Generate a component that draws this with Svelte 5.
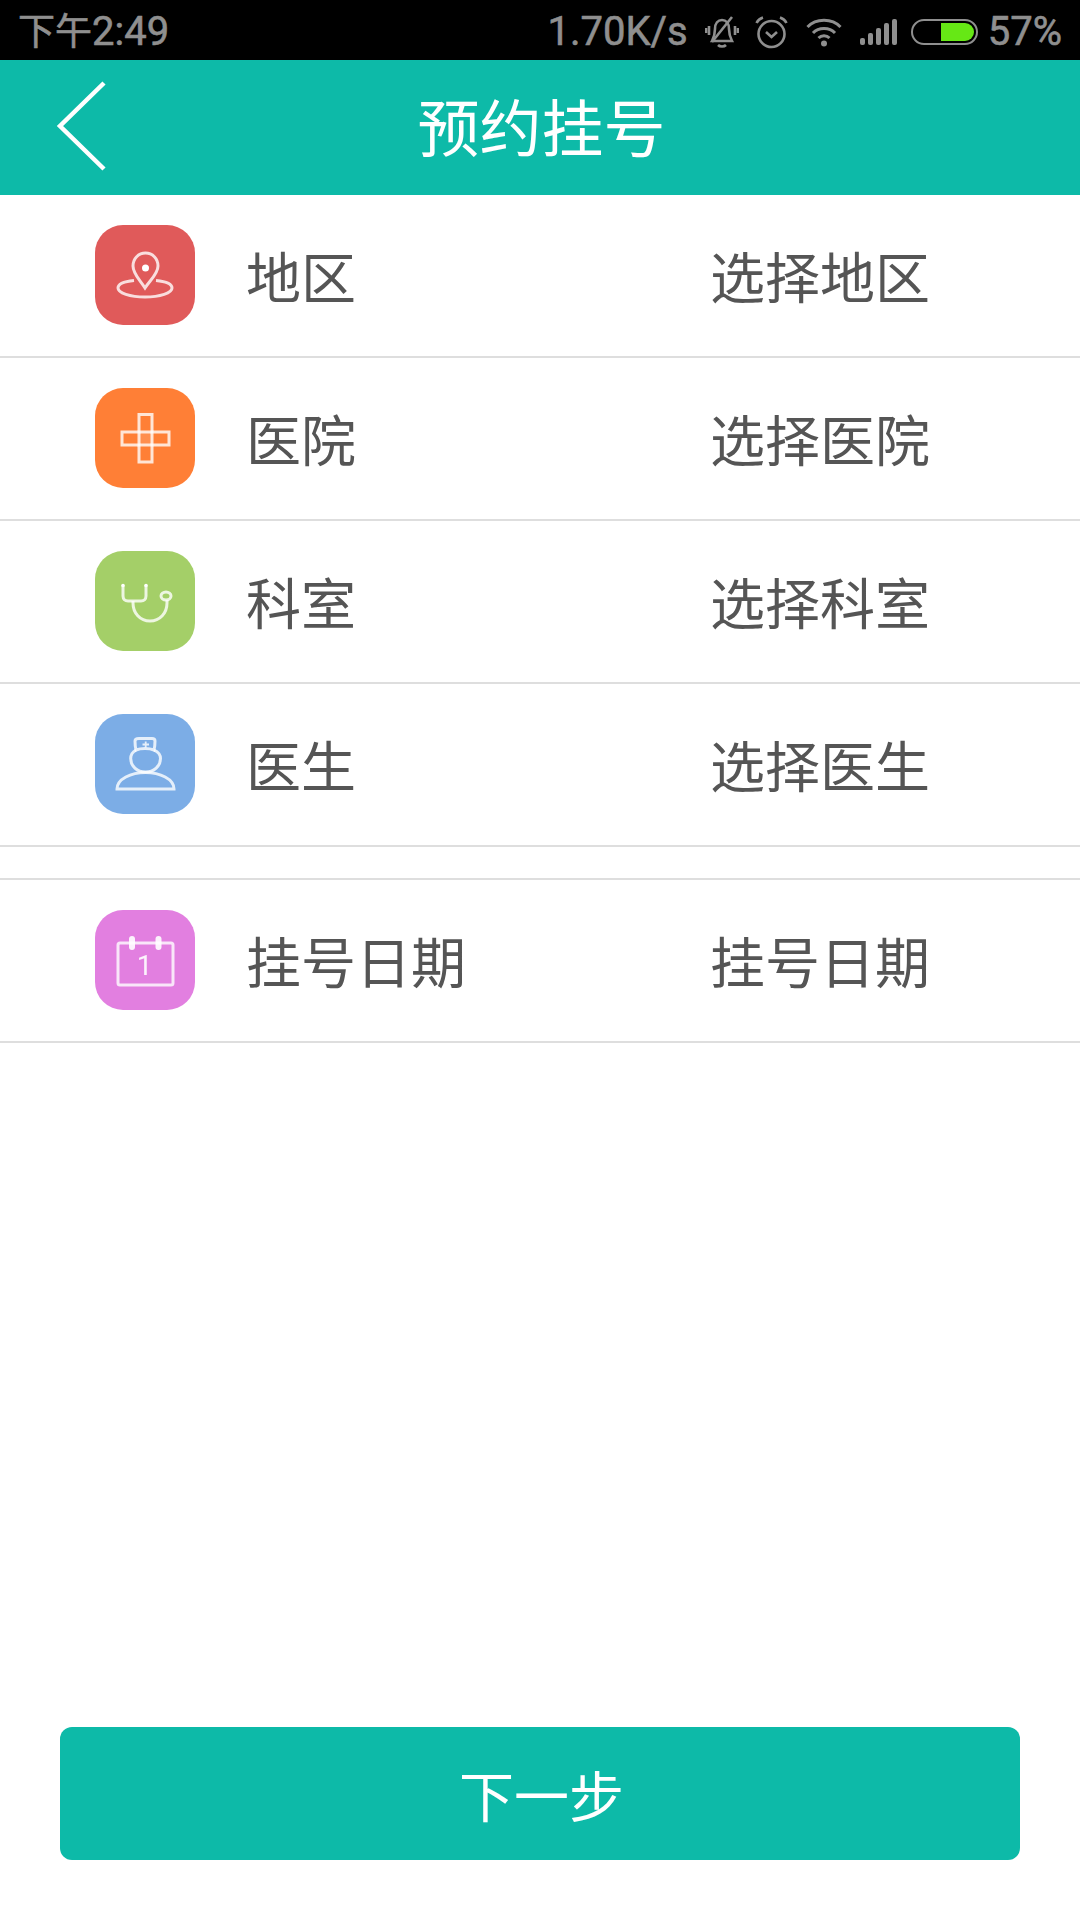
<script>
	const rows = [
		{ name: "地区", hint: "选择地区", color: "#e05a5a", icon: "pin" },
		{ name: "医院", hint: "选择医院", color: "#ff7f36", icon: "cross" },
		{ name: "科室", hint: "选择科室", color: "#a4cf68", icon: "scope" },
		{ name: "医生", hint: "选择医生", color: "#7cade6", icon: "nurse" }
	];
	const dateRow = { name: "挂号日期", hint: "挂号日期", color: "#e27fe0", icon: "calendar" };
</script>

{#snippet rowIcon(kind)}
	<svg width="100" height="100" viewBox="0 0 100 100" fill="none" stroke="#fff" stroke-opacity="0.8" stroke-width="3">
		{#if kind === "pin"}
			<path d="M39 55.500C29 56.500 23 59 23 63C23 68 35 72 50 72C65 72 77 68 77 63C77 59 71 56.500 61 55.500" />
			<path d="M50 63C45 55 38 49 38 41C38 33.500 43.500 28 50.500 28C57.500 28 63 33.500 63 41C63 49 55 55 50 63Z" />
			<circle cx="50.500" cy="43" r="3.500" fill="#fff" stroke="none" />
		{:else if kind === "cross"}
			<path d="M44 26.500H57V44H74V57H57V74H44V57H27V44H44Z" />
			<path d="M44 44H57V57H44Z" fill="#fff" fill-opacity="0.12" />
		{:else if kind === "scope"}
			<path d="M28 35V45C28 48 30 50 33 50H46C49 50 51 48 51 45V35" />
			<path d="M38 50V52C38 62 45 70 55 70C65 70 72 62 72 52V49" />
			<ellipse cx="71" cy="45" rx="5" ry="4" />
			<circle cx="28" cy="34.500" r="1.800" fill="#fff" stroke="none" />
			<circle cx="51" cy="34.500" r="1.800" fill="#fff" stroke="none" />
		{:else if kind === "nurse"}
			<path d="M41 36C40 32 40 29 40 27C40 25 42 24.500 44 24.500H57C59 24.500 60 25 60 27C60 29 60 32 59 36C54 34 46 34 41 36Z" />
			<path d="M41 36C37.500 38 35.700 41 35.700 44.500C35.700 52 42 58 50.500 58C59 58 65.500 52 65.500 44.500C65.500 41 63.500 38 59 36" />
			<path d="M22 75C22 65 36 58.500 50.500 58.500C65 58.500 79 65 79 75Z" />
			<path d="M47.500 30.500H54M50.700 27.500V33.500" stroke-width="1.800" />
		{:else if kind === "calendar"}
			<rect x="23" y="33" width="55" height="42" rx="2" />
			<rect x="34" y="26" width="6" height="14" rx="3" fill="#fff" stroke="none" fill-opacity="0.9" />
			<rect x="60.500" y="26" width="6" height="14" rx="3" fill="#fff" stroke="none" fill-opacity="0.9" />
			<text x="49.500" y="64.500" class="day">1</text>
		{/if}
	</svg>
{/snippet}

{#snippet row(item)}
	<div class="row">
		<div class="tile" style="background: {item.color}">
			{@render rowIcon(item.icon)}
		</div>
		<span class="name">{item.name}</span>
		<span class="hint">{item.hint}</span>
	</div>
{/snippet}

<div class="page">
	<div class="status">
		<span class="clock"><span class="ampm">下午</span>2:49</span>
		<div class="status-right">
			<span class="speed">1.70K/s</span>
			<svg class="bell" width="34" height="34" viewBox="0 0 34 34" fill="none" stroke="#8f8f8f" stroke-width="2.6">
				<path d="M7 26C9 22 10 18 10 14C10 8 13 5 17 5C21 5 24 8 24 14C24 18 25 22 27 26Z" />
				<path d="M13 30C15 32 19 32 21 30" />
				<path d="M7 27L27 2" />
				<path d="M4 11V20M1 13V18M30 11V20M33 13V18" />
			</svg>
			<svg class="alarm" width="33" height="34" viewBox="0 0 33 34" fill="none" stroke="#8f8f8f" stroke-width="2.6">
				<circle cx="16.500" cy="19" r="13" />
				<path d="M11 17L16.500 22L22 17" />
				<path d="M1.500 8C3 5 5 3.500 8 2.500M31.500 8C30 5 28 3.500 25 2.500" />
			</svg>
			<svg class="wifi" width="36" height="30" viewBox="0 0 36 30" fill="none" stroke="#8f8f8f" stroke-width="3">
				<path d="M1.500 10C10 1 26 1 34.500 10" />
				<path d="M7 16C12.500 10 23.500 10 29 16" />
				<path d="M12.500 21C15.500 18 20.500 18 23.500 21" />
				<circle cx="18" cy="26.500" r="3" fill="#8f8f8f" stroke="none" />
			</svg>
			<div class="signal">
				<i style="height: 7px"></i><i style="height: 12px"></i><i style="height: 17px"></i><i style="height: 22px"></i><i style="height: 26px"></i>
			</div>
			<div class="battery"><div class="charge"></div></div>
			<span class="percent">57%</span>
		</div>
	</div>

	<div class="header">
		<svg class="back" width="52" height="90" viewBox="0 0 52 90" fill="none" stroke="#fff" stroke-width="4.500">
			<path d="M48 2L4 45L48 88" />
		</svg>
		<span class="title">预约挂号</span>
	</div>

	{#each rows as item}
		{@render row(item)}
	{/each}

	<div class="spacer"></div>
	{@render row(dateRow)}

	<div class="footer">
		<button class="next">下一步</button>
	</div>
</div>

<style>
	:global(body) {
		background: #fff;
	}

	.page {
		width: 1080px;
		height: 1920px;
		display: flex;
		flex-direction: column;
		font-family: "Noto Sans CJK SC", "Noto Sans", sans-serif;
		overflow: hidden;
	}

	.status {
		height: 60px;
		box-sizing: border-box;
		padding: 3px 18px 0 18px;
		flex-shrink: 0;
		background: #000;
		color: #8f8f8f;
		display: flex;
		align-items: center;
		justify-content: space-between;
		font-family: Roboto, "Noto Sans CJK SC", sans-serif;
		font-size: 40px;
		line-height: 57px;
		-webkit-text-stroke: 0.6px #8f8f8f;
	}

	.ampm {
		font-size: 37px;
	}

	.status-right {
		display: flex;
		align-items: center;
	}

	.speed {
		margin-right: 17px;
	}

	.bell {
		margin-right: 16px;
	}

	.alarm {
		margin-right: 18px;
	}

	.wifi {
		margin-right: 18px;
	}

	.signal {
		display: flex;
		align-items: flex-end;
		gap: 3px;
		height: 26px;
		margin-right: 14px;
	}

	.signal i {
		display: block;
		width: 5px;
		background: #8f8f8f;
		border-radius: 2px;
	}

	.battery {
		width: 67px;
		height: 26px;
		box-sizing: border-box;
		border: 2px solid #8f8f8f;
		border-radius: 13px;
		padding: 2px;
		display: flex;
		justify-content: flex-end;
		margin-right: 10px;
	}

	.charge {
		width: 33px;
		height: 18px;
		background: #66e815;
		border-radius: 0 9px 9px 0;
	}

	.header {
		height: 135px;
		flex-shrink: 0;
		background: #0dbaa8;
		display: flex;
		align-items: center;
		justify-content: center;
		position: relative;
	}

	.back {
		position: absolute;
		left: 56px;
		top: 21px;
	}

	.title {
		color: #fff;
		font-size: 62px;
		padding: 0 0 6px 3px;
	}

	.row {
		height: 161px;
		flex-shrink: 0;
		border-bottom: 2px solid #dedede;
		display: flex;
		align-items: center;
		padding-left: 95px;
		color: #555;
		font-size: 55px;
	}

	.tile {
		width: 100px;
		height: 100px;
		border-radius: 28px;
		flex-shrink: 0;
		margin-top: -1px;
		margin-right: 51px;
	}

	.tile svg {
		display: block;
		filter: blur(0.5px);
	}

	.day {
		fill: #fff;
		fill-opacity: 0.9;
		stroke: none;
		font-family: Roboto, sans-serif;
		font-size: 28px;
		text-anchor: middle;
	}

	.name {
		width: 464px;
		padding-bottom: 4px;
	}

	.hint {
		padding-bottom: 4px;
	}

	.spacer {
		height: 31px;
		flex-shrink: 0;
		border-bottom: 2px solid #dedede;
	}

	.footer {
		margin-top: auto;
		padding: 0 60px 60px;
	}

	.next {
		display: block;
		width: 100%;
		height: 133px;
		border: none;
		border-radius: 12px;
		background: #0dbaa8;
		color: #fff;
		font-family: inherit;
		font-size: 55px;
		padding: 0 0 2px 3px;
	}
</style>
